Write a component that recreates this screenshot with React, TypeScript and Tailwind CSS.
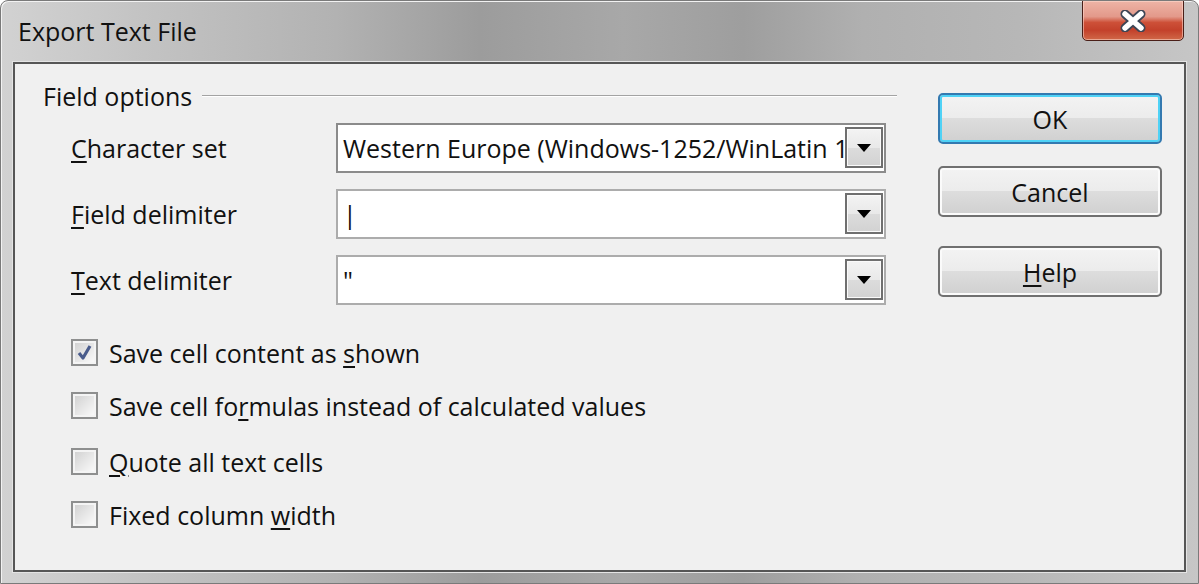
import React from "react";

function CloseButton() {
  return (
    <div className="w-[102px] h-[41px] -mt-[1px] rounded-b-[5px] border border-[#4a1f18] shadow-[inset_0_0_0_1px_rgba(255,220,210,0.55)] bg-[linear-gradient(180deg,#eeb4a6_0%,#e3998a_40%,#cd5038_55%,#c3412b_75%,#d06848_100%)] flex items-center justify-center">
      <svg width="34" height="22" viewBox="0 0 34 22">
        <path d="M9 4 L25 18 M25 4 L9 18" stroke="#3d4656" strokeWidth="9" strokeLinecap="round" fill="none" />
        <path d="M9 4 L25 18 M25 4 L9 18" stroke="#ffffff" strokeWidth="5.5" strokeLinecap="round" fill="none" />
      </svg>
    </div>
  );
}

function DropButton() {
  return (
    <div className="w-[38px] h-[41px] mt-[2px] mr-[1px] border-2 border-[#6f6f6f] shadow-[inset_0_0_0_1px_#fafafa] bg-[linear-gradient(180deg,#f3f3f3_0%,#e9e9e9_50%,#dcdcdc_51%,#d2d2d2_100%)] flex items-center justify-center shrink-0">
      <svg width="14" height="8" viewBox="0 0 14 8">
        <path d="M0 0 L14 0 L7 8 Z" fill="#000" />
      </svg>
    </div>
  );
}

function Combo({ value, focused }: { value: string; focused?: boolean }) {
  return (
    <div
      className={
        "w-[550px] h-[50px] bg-white border-2 flex items-start " +
        (focused ? "border-[#8b8b8b]" : "border-[#acacac]")
      }
    >
      <div className="flex-1 overflow-hidden whitespace-nowrap pl-[5px] h-full flex items-center">
        {value}
      </div>
      <DropButton />
    </div>
  );
}

function Check({ checked }: { checked?: boolean }) {
  return (
    <div className="w-[27px] h-[27px] border-2 border-[#8e8f8f] bg-[#f4f4f4] p-[2px] shrink-0">
      <div className="w-full h-full bg-[linear-gradient(135deg,#d2d2d2_0%,#e6e6e6_50%,#f9f9f9_100%)] flex items-center justify-center">
        {checked && (
          <svg width="17" height="17" viewBox="0 0 17 17">
            <path d="M3 9 L7 14 L14 2" stroke="#4a5c8c" strokeWidth="3.2" fill="none" strokeLinejoin="round" />
          </svg>
        )}
      </div>
    </div>
  );
}

function Btn({ children, focused }: { children: React.ReactNode; focused?: boolean }) {
  return (
    <div
      className={
        "w-[224px] h-[51px] rounded-[5px] border-2 flex items-center justify-center bg-[linear-gradient(180deg,#f3f3f3_0%,#ececec_48%,#dddddd_50%,#d0d0d0_100%)] " +
        (focused
          ? "border-[#3379b0] shadow-[inset_0_0_0_2px_#4fd2f6]"
          : "border-[#707070] shadow-[inset_0_0_0_2px_#fbfbfb]")
      }
    >
      {children}
    </div>
  );
}

const U = ({ children }: { children: React.ReactNode }) => (
  <span className="underline underline-offset-[3px] decoration-[1.5px]">{children}</span>
);

export default function App() {
  return (
    <div className="w-[1199px] h-[584px] flex flex-col rounded-t-[8px] border border-[#7a7a7a] overflow-hidden font-['Open_Sans','Noto_Sans',sans-serif] text-[#111] bg-[linear-gradient(90deg,#d2d2d2_0%,#c3c3c3_12%,#b2b2b2_28%,#9c9c9c_40%,#a8a8a8_52%,#9e9e9e_62%,#b0b0b0_72%,#b7b7b7_85%,#c6c6c6_100%)] shadow-[inset_1px_1px_0_#f2f2f2]">
      <div className="h-[60px] flex items-start justify-between pl-[17px] pr-[14px] shrink-0">
        <div className="pt-[14px] text-[25px] leading-[32px]">Export Text File</div>
        <CloseButton />
      </div>
      <div className="flex-1 ml-[11px] mr-[11px] mb-[10px] border border-[#e4e4e4]">
        <div className="w-full h-full border-2 border-[#565656] bg-[#f0f0f0] flex text-[25px] leading-[30px]">
          <div className="w-[882px] pl-[28px] pt-[17px] flex flex-col">
            <div className="h-[30px] flex items-center">
              <span className="leading-[30px]">Field options</span>
              <div className="flex-1 ml-[10px] h-[2px] border-t border-[#a3a3a3] border-b border-b-white" />
            </div>
            <div className="mt-[12px] pl-[28px] flex flex-col gap-[16px]">
              <div className="flex items-center">
                <div className="w-[265px]"><U>C</U>haracter set</div>
                <Combo value="Western Europe (Windows-1252/WinLatin 1)" focused />
              </div>
              <div className="flex items-center">
                <div className="w-[265px]"><U>F</U>ield delimiter</div>
                <Combo value="|" />
              </div>
              <div className="flex items-center">
                <div className="w-[265px]"><U>T</U>ext delimiter</div>
                <Combo value={'"'} />
              </div>
            </div>
            <div className="mt-[34px] pl-[28px] flex flex-col">
              <div className="h-[27px] flex items-center gap-[11px]">
                <Check checked />
                <span>Save cell content as <U>s</U>hown</span>
              </div>
              <div className="mt-[26px] h-[27px] flex items-center gap-[11px]">
                <Check />
                <span>Save cell fo<U>r</U>mulas instead of calculated values</span>
              </div>
              <div className="mt-[29px] h-[27px] flex items-center gap-[11px]">
                <Check />
                <span><U>Q</U>uote all text cells</span>
              </div>
              <div className="mt-[26px] h-[27px] flex items-center gap-[11px]">
                <Check />
                <span>Fixed column <U>w</U>idth</span>
              </div>
            </div>
          </div>
          <div className="ml-[41px] pt-[29px] flex flex-col gap-[23px]">
            <Btn focused>OK</Btn>
            <div className="-mt-[1px]"><Btn>Cancel</Btn></div>
            <div className="mt-[6px]"><Btn><U>H</U>elp</Btn></div>
          </div>
        </div>
      </div>
    </div>
  );
}
